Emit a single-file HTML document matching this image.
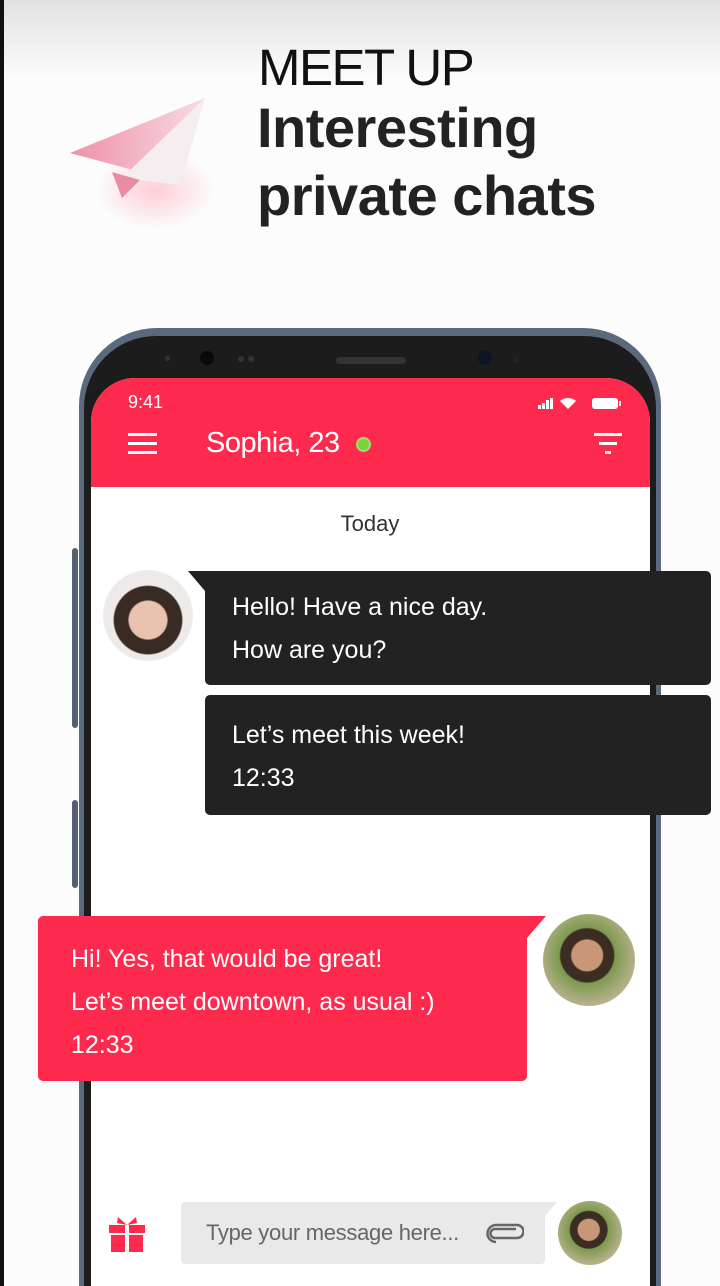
<!DOCTYPE html>
<html><head><meta charset="utf-8"><style>
*{margin:0;padding:0;box-sizing:border-box}
html,body{width:720px;height:1286px;overflow:hidden}
body{position:relative;background:#fcfcfc;font-family:"Liberation Sans",sans-serif}
.a{position:absolute}
.t{color:#fff;font-size:25px;line-height:43px}
</style></head><body>
<div class="a" style="left:0;top:0;width:720px;height:80px;background:linear-gradient(#e2e2e2,#fcfcfc)"></div>
<div class="a" style="left:0;top:0;width:4px;height:1286px;background:#111"></div>
<div class="a" style="left:258px;top:38px;font-size:51px;color:#111;letter-spacing:-1.5px">MEET UP</div>
<div class="a" style="left:257px;top:94px;font-size:56px;font-weight:bold;color:#222;line-height:68px;letter-spacing:-0.5px">Interesting<br>private chats</div>
<div class="a" style="left:95px;top:150px;width:120px;height:80px;border-radius:50%;background:radial-gradient(rgba(255,120,140,.35),rgba(255,255,255,0) 70%)"></div>
<svg class="a" style="left:60px;top:90px" width="160" height="120" viewBox="0 0 160 120">
<defs><linearGradient id="g" x1="0" y1="0" x2="1" y2="0"><stop offset="0" stop-color="#f090a8"/><stop offset="1" stop-color="#f6dce2"/></linearGradient></defs>
<polygon points="10,63 145,8 110,90" fill="url(#g)"/>
<polygon points="62,88 120,95 145,8" fill="#f4eef0"/>
<polygon points="52,82 62,108 80,90" fill="#e88ca2"/>
</svg>
<div class="a" style="left:72px;top:548px;width:6px;height:180px;background:#556070;border-radius:3px"></div>
<div class="a" style="left:72px;top:800px;width:6px;height:88px;background:#556070;border-radius:3px"></div>
<div class="a" style="left:79px;top:328px;width:582px;height:958px;background:#5a6a7c;border-radius:78px 78px 0 0"></div>
<div class="a" style="left:84px;top:336px;width:572px;height:950px;background:#1c1c1c;border-radius:72px 72px 0 0"></div>
<div class="a" style="left:91px;top:378px;width:559px;height:908px;background:#fff;border-radius:44px 44px 0 0;overflow:hidden">
 <div class="a" style="left:0;top:0;width:559px;height:109px;background:#fe2a4e"></div>
</div>
<div class="a" style="left:165px;top:356px;width:5px;height:5px;border-radius:50%;background:#333"></div>
<div class="a" style="left:200px;top:351px;width:14px;height:14px;border-radius:50%;background:#0a0a0a"></div>
<div class="a" style="left:238px;top:356px;width:6px;height:6px;border-radius:50%;background:#333"></div>
<div class="a" style="left:248px;top:356px;width:6px;height:6px;border-radius:50%;background:#333"></div>
<div class="a" style="left:336px;top:357px;width:70px;height:7px;border-radius:4px;background:#333"></div>
<div class="a" style="left:478px;top:351px;width:14px;height:14px;border-radius:50%;background:#0d1424"></div>
<div class="a" style="left:513px;top:356px;width:6px;height:6px;border-radius:50%;background:#222"></div>
<div class="a" style="left:128px;top:392px;color:#fff;font-size:18px">9:41</div>
<svg class="a" style="left:536px;top:396px" width="90" height="16">
<rect x="2" y="9" width="3" height="4" fill="#fff"/><rect x="6" y="7" width="3" height="6" fill="#fff"/><rect x="10" y="4" width="3" height="9" fill="#fff"/><rect x="14" y="2" width="3" height="11" fill="#fff"/>
<path d="M32 13 L24 5 A12 12 0 0 1 40 5 Z" fill="#fff"/>
<rect x="56" y="2" width="26" height="11" rx="3" fill="#fff"/><rect x="83" y="5" width="2" height="5" fill="#fff"/>
</svg>
<svg class="a" style="left:128px;top:433px" width="30" height="22"><g fill="#fff"><rect y="0" width="29" height="3"/><rect y="9" width="29" height="3"/><rect y="18" width="29" height="3"/></g></svg>
<div class="a" style="left:206px;top:427px;color:#fff;font-size:29px;letter-spacing:-0.5px">Sophia, 23</div>
<div class="a" style="left:356px;top:437px;width:15px;height:15px;border-radius:50%;background:#7dd23c;border:2px solid #fff4"></div>
<svg class="a" style="left:594px;top:433px" width="30" height="24"><g fill="#fff"><rect x="0" y="0" width="28" height="3"/><rect x="5" y="9" width="18" height="3"/><rect x="11" y="18" width="6" height="3"/></g></svg>
<div class="a" style="left:0;top:511px;width:740px;text-align:center;color:#333;font-size:22px">Today</div>
<div class="a" style="left:103px;top:570px;width:90px;height:91px;border-radius:50%;background:radial-gradient(circle at 50% 55%,#e9c3b0 0 28%,#3a2a24 30% 50%,#efeaea 52%)"></div>
<svg class="a" style="left:186px;top:571px" width="30" height="30"><polygon points="2,0 30,0 19,30 19,20" fill="#222"/></svg>
<div class="a" style="left:205px;top:571px;width:506px;height:114px;background:#222;border-radius:5px;padding:15px 0 0 27px"><div class="t">Hello! Have a nice day.<br>How are you?</div></div>
<div class="a" style="left:205px;top:695px;width:506px;height:120px;background:#222;border-radius:5px;padding:19px 0 0 27px"><div class="t">Let’s meet this week!<br>12:33</div></div>
<svg class="a" style="left:515px;top:916px" width="32" height="30"><polygon points="0,0 31,0 12,22 0,22" fill="#fe2a4e"/></svg>
<div class="a" style="left:38px;top:916px;width:489px;height:165px;background:#fe2a4e;border-radius:5px;padding:22px 0 0 33px"><div class="t">Hi! Yes, that would be great!<br>Let’s meet downtown, as usual :)<br>12:33</div></div>
<div class="a" style="left:543px;top:914px;width:92px;height:92px;border-radius:50%;background:radial-gradient(circle at 48% 45%,#c99677 0 22%,#3b2d22 24% 38%,#7c9a4f 40%,#b7b08a 70%)"></div>
<svg class="a" style="left:107px;top:1214px" width="40" height="40" viewBox="0 0 40 40"><g fill="#fe2a4e"><path d="M20 11 L11 3 L10 9 Z M20 11 L29 3 L30 9 Z"/><rect x="2" y="11" width="16" height="8"/><rect x="22" y="11" width="16" height="8"/><rect x="4" y="21" width="14" height="17"/><rect x="22" y="21" width="14" height="17"/></g></svg>
<div class="a" style="left:181px;top:1202px;width:364px;height:62px;background:#e9e9e9;border-radius:4px"></div>
<svg class="a" style="left:540px;top:1202px" width="18" height="20"><polygon points="0,0 17,0 5,14 0,14" fill="#e9e9e9"/></svg>
<div class="a" style="left:206px;top:1220px;color:#666;font-size:22px;letter-spacing:-0.3px">Type your message here...</div>
<svg class="a" style="left:486px;top:1222px" width="38" height="22" viewBox="0 0 38 22"><path d="M30 7 H9 a4.5 4.5 0 0 0 0 9 H31 a6.5 6.5 0 0 0 0-13 H10 a8.5 8.5 0 0 0 0 17" fill="none" stroke="#666" stroke-width="2.5"/></svg>
<div class="a" style="left:558px;top:1201px;width:64px;height:64px;border-radius:50%;background:radial-gradient(circle at 48% 45%,#c99677 0 22%,#3b2d22 24% 38%,#7c9a4f 40%,#b7b08a 70%)"></div>
</body></html>
